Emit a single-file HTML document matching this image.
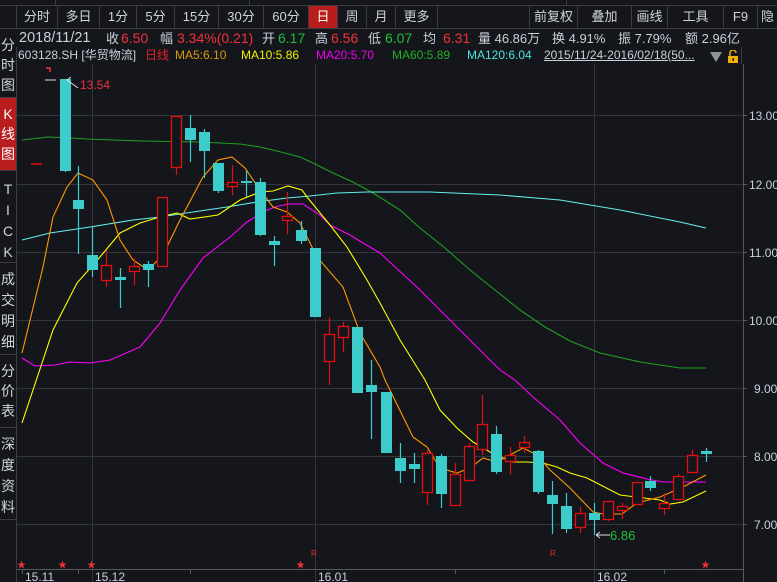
<!DOCTYPE html>
<html><head><meta charset="utf-8"><style>
*{margin:0;padding:0;box-sizing:border-box}
body{width:777px;height:582px;background:#14161b;overflow:hidden;position:relative;font-family:"Liberation Sans","Noto Sans CJK SC",sans-serif;color:#c8d0d8}
.a{position:absolute;white-space:nowrap}
.btn{position:absolute;top:6px;height:22px;font-size:13px;line-height:22px;text-align:center;border-right:1px solid #3a3d44;color:#d0d4da}
.side{position:absolute;left:0;width:16px;font-size:14px;line-height:20px;text-align:center;color:#d0d4da;border-bottom:1px solid #3a3d44}
.r{color:#f0313a}.g{color:#1fbf3a}
.inf{top:30px;font-size:13px;line-height:17px}
.r3{top:48px;font-size:12px;line-height:15px}
</style></head><body>
<div class="a" style="left:0;top:0;width:777px;height:6px;border-bottom:1px solid #3a3d44"></div>
<div class="a" style="left:55px;top:0;width:1px;height:5px;background:#3a3d44"></div>
<div class="a" style="left:249px;top:0;width:1px;height:5px;background:#3a3d44"></div>
<div class="a" style="left:566px;top:0;width:1px;height:5px;background:#3a3d44"></div>
<div class="a" style="left:0;top:28px;width:777px;height:1px;background:#3a3d44"></div>
<div class="a" style="left:16px;top:6px;width:1px;height:22px;background:#3a3d44"></div>
<div class="btn" style="left:17px;width:41px">分时</div>
<div class="btn" style="left:58px;width:42px">多日</div>
<div class="btn" style="left:100px;width:37px">1分</div>
<div class="btn" style="left:137px;width:38px">5分</div>
<div class="btn" style="left:175px;width:44px">15分</div>
<div class="btn" style="left:219px;width:45px">30分</div>
<div class="btn" style="left:264px;width:45px">60分</div>
<div class="btn" style="left:309px;width:29px;background:#b81c1c;color:#fff">日</div>
<div class="btn" style="left:338px;width:29px">周</div>
<div class="btn" style="left:367px;width:29px">月</div>
<div class="btn" style="left:396px;width:42px">更多</div>
<div class="btn" style="left:529px;width:49px;border-left:1px solid #3a3d44">前复权</div>
<div class="btn" style="left:578px;width:54px">叠加</div>
<div class="btn" style="left:632px;width:36px">画线</div>
<div class="btn" style="left:668px;width:56px">工具</div>
<div class="btn" style="left:724px;width:34px">F9</div>
<div class="btn" style="left:758px;width:19px;border:none">隐</div>

<div class="a inf" style="left:19px;font-size:14.5px">2018/11/21</div>
<div class="a inf" style="left:106px">收</div><div class="a inf r" style="left:121px;font-size:14px">6.50</div>
<div class="a inf" style="left:160px">幅</div><div class="a inf r" style="left:177px;font-size:14px">3.34%(0.21)</div>
<div class="a inf" style="left:262px">开</div><div class="a inf g" style="left:278px;font-size:14px">6.17</div>
<div class="a inf" style="left:315px">高</div><div class="a inf r" style="left:331px;font-size:14px">6.56</div>
<div class="a inf" style="left:368px">低</div><div class="a inf g" style="left:385px;font-size:14px">6.07</div>
<div class="a inf" style="left:423px">均</div><div class="a inf r" style="left:443px;font-size:14px">6.31</div>
<div class="a inf" style="left:478px">量 46.86万</div>
<div class="a inf" style="left:552px">换 4.91%</div>
<div class="a inf" style="left:618px">振 7.79%</div>
<div class="a inf" style="left:685px">额 2.96亿</div>

<div class="a r3" style="left:18px">603128.SH [华贸物流]</div>
<div class="a r3" style="left:145px;color:#e8202a">日线</div>
<div class="a r3" style="left:175px;color:#d89a10">MA5:6.10</div>
<div class="a r3" style="left:241px;color:#f0f000">MA10:5.86</div>
<div class="a r3" style="left:316px;color:#f000f0">MA20:5.70</div>
<div class="a r3" style="left:392px;color:#20b020">MA60:5.89</div>
<div class="a r3" style="left:467px;color:#50e0e0">MA120:6.04</div>
<div class="a r3" style="left:544px;text-decoration:underline">2015/11/24-2016/02/18(50...</div>
<svg class="a" style="left:709px;top:50px" width="32" height="14"><polygon points="1,2 13,2 7,12" fill="#909498"/><rect x="19" y="6" width="10" height="7" fill="#f0b000"/><path d="M21,6 V3 a3,3 0 0 1 6,0" stroke="#f0b000" stroke-width="1.5" fill="none"/><rect x="23.5" y="8" width="1.5" height="3" fill="#222"/></svg>
<div class="a" style="left:16px;top:47px;width:1px;height:535px;background:#3a3d44"></div>
<div class="a" style="left:741px;top:47px;width:1px;height:17px;background:#3a3d44"></div>

<div class="side" style="top:29px;height:69px;padding-top:6px">分<br>时<br>图</div>
<div class="side" style="top:98px;height:73px;background:#b81c1c;color:#fff;padding-top:6px">K<br>线<br>图</div>
<div class="side" style="top:171px;height:92px;padding-top:8px;line-height:21px">T<br>I<br>C<br>K</div>
<div class="side" style="top:263px;height:92px;padding-top:6px;line-height:21px">成<br>交<br>明<br>细</div>
<div class="side" style="top:355px;height:73px;padding-top:6px">分<br>价<br>表</div>
<div class="side" style="top:428px;height:92px;padding-top:6px;line-height:21px">深<br>度<br>资<br>料</div>

<svg class="a" style="left:0;top:0" width="777" height="582">
<g stroke="#33363c" stroke-width="1">
<line x1="17" y1="115.5" x2="743" y2="115.5"/><line x1="17" y1="184.5" x2="743" y2="184.5"/>
<line x1="17" y1="252.5" x2="743" y2="252.5"/><line x1="17" y1="320.5" x2="743" y2="320.5"/>
<line x1="17" y1="388.5" x2="743" y2="388.5"/><line x1="17" y1="456.5" x2="743" y2="456.5"/>
<line x1="17" y1="524.5" x2="743" y2="524.5"/>
<line x1="92.5" y1="64" x2="92.5" y2="582"/><line x1="315.5" y1="64" x2="315.5" y2="582"/><line x1="594.5" y1="64" x2="594.5" y2="582"/>
</g>
<g stroke="#55585e"><line x1="17" y1="569.5" x2="743" y2="569.5"/><line x1="743.5" y1="64" x2="743.5" y2="582"/>
<line x1="22.5" y1="569" x2="22.5" y2="574"/><line x1="78.5" y1="569" x2="78.5" y2="574"/><line x1="190.5" y1="569" x2="190.5" y2="574"/><line x1="455.5" y1="569" x2="455.5" y2="574"/><line x1="664.5" y1="569" x2="664.5" y2="574"/>
<line x1="743" y1="115.5" x2="747" y2="115.5"/><line x1="743" y1="184.5" x2="747" y2="184.5"/><line x1="743" y1="252.5" x2="747" y2="252.5"/><line x1="743" y1="320.5" x2="747" y2="320.5"/><line x1="743" y1="388.5" x2="747" y2="388.5"/><line x1="743" y1="456.5" x2="747" y2="456.5"/><line x1="743" y1="524.5" x2="747" y2="524.5"/>
</g>
<g font-size="12" fill="#c8d0d8" font-family="Liberation Sans,sans-serif">
<text x="749" y="120">13.00</text><text x="749" y="189">12.00</text><text x="749" y="257">11.00</text><text x="749" y="325">10.00</text><text x="754" y="393">9.00</text><text x="754" y="461">8.00</text><text x="754" y="529">7.00</text>
<text x="25" y="581">15.11</text><text x="95" y="581">15.12</text><text x="318" y="581">16.01</text><text x="597" y="581">16.02</text>
</g>
<g fill="none" stroke-width="1.1">
<polyline stroke="#20a020" points="22,140 40,138 48,137 72,138 87,139 113,140 143,141 200,142 240,144 260,147 277,151 300,157 313,163 333,173 353,182 373,193 400,210 420,228 445,248 470,270 495,290 520,310 545,327 570,341 600,353 640,362 680,368 706,368"/>
<polyline stroke="#60f0f0" points="22,240 50,233 90,227 133,220 160,217 193,212 227,207 257,202 287,198 310,196 337,193 367,192 430,192 500,195 560,200 620,210 680,222 706,228"/>
<polyline stroke="#ff00ff" points="22,358 35,366 55,365 70,362 90,363 110,360 140,347 160,323 180,290 203,258 230,237 247,222 263,212 275,207 288,204 303,204 320,215 330,225 350,235 363,243 380,253 420,290 460,330 500,370 515,380 533,397 560,420 580,443 603,463 623,473 647,479 663,482 706,482"/>
<polyline stroke="#ffff00" points="22,423 43,360 53,330 77,283 100,257 120,233 140,223 160,217 177,213 190,219 218,215 240,200 260,192 273,191 288,186 302,190 307,197 330,225 347,247 367,280 380,303 400,340 425,380 440,410 457,428 473,442 490,452 503,458 513,462 527,462 543,463 557,467 570,473 587,478 620,495 660,500 670,504 683,502 706,491"/>
<polyline stroke="#ff9900" points="22,353 43,267 53,217 67,187 78,173 93,180 107,200 120,240 133,260 148,270 163,255 180,220 203,177 218,160 232,157 245,168 260,190 273,207 287,212 300,223 307,237 317,257 343,287 360,333 380,367 385,380 413,437 427,447 440,468 457,473 470,468 483,458 497,462 510,455 523,448 537,455 550,470 570,488 593,512 603,514 622,514 637,503 660,497 683,487 706,475"/>
</g>
<g id="c" stroke-width="1.2"></g>
<g fill="#f0313a" font-size="12"><text x="80" y="89">13.54</text></g>
<g stroke="#e0e0e0" fill="none"><line x1="45" y1="80" x2="56" y2="80"/><path d="M78,88 L67,80 M67,80 L71,77 M67,80 L71,83"/></g>
<path d="M46,68 H50 V72" stroke="#f0313a" stroke-width="1.5" fill="none"/>
<g stroke="#e0e0e0" fill="none"><path d="M596,535 H610 M596,535 L600,532 M596,535 L600,538"/></g>
<text x="610" y="540" fill="#1fbf3a" font-size="13">6.86</text>
<g fill="#f0313a" font-size="9"><text x="17" y="568">★</text><text x="58" y="568">★</text><text x="87" y="568">★</text><text x="296" y="568">★</text><text x="701" y="568">★</text></g>
<g fill="#e03030" font-size="8"><text x="311" y="556">R</text><text x="550" y="556">R</text></g>
</svg>
<script>
var d=[[64.5,'C',79,171,79,172],[78.4,'C',200,209,166,254],[92.2,'C',255,270,227,277],[106,'R',265,280,250,287],[120,'C',277,280,268,308],[134,'R',266,271,258,285],[148,'C',264,270,261,287],[162,'R',197,266,197,266],[176,'R',116,167,116,175],[190,'C',128,140,115,162],[204,'C',132,151,129,178],[218,'C',163,191,163,193],[232,'R',182,186,165,195],[246,'C',181,183,170,197],[260,'C',182,235,178,236],[274,'C',241,245,236,266],[287,'R',216,220,192,234],[301,'C',230,241,221,244],[315,'C',248,317,248,317],[329,'R',334,361,317,385],[343,'R',326,337,322,352],[357,'C',327,393,327,393],[371,'C',385,392,360,439],[386,'C',392,453,392,453],[400,'C',458,471,443,483],[414,'C',464,469,453,483],[427,'R',453,492,450,505],[441,'C',456,494,454,508],[455,'R',474,505,463,506],[469,'R',446,480,443,480],[482,'R',424,449,395,455],[496,'C',434,472,426,474],[510,'R',455,461,447,474],[524,'R',442,447,436,453],[538,'C',451,492,450,494],[552,'C',495,504,481,534],[566,'C',506,529,493,533],[580,'R',513,527,507,533],[594,'C',513,520,503,535],[608,'R',501,519,501,521],[622,'R',506,510,503,519],[637,'R',482,504,482,505],[650,'C',481,488,476,491],[664,'R',503,508,493,515],[678,'R',476,499,474,500],[692,'R',455,472,450,472],[706,'C',451,454,448,462]];
var s='<line x1="31" y1="164" x2="42" y2="164" stroke="#e01010" stroke-width="1.5"/>';
d.forEach(function(a){var x=Math.round(a[0]);
if(a[1]=='C'){s+='<line x1="'+(x+.5)+'" y1="'+a[4]+'" x2="'+(x+.5)+'" y2="'+a[5]+'" stroke="#3ccccc"/><rect x="'+(x-5)+'" y="'+a[2]+'" width="11" height="'+Math.max(2,a[3]-a[2])+'" fill="#3ccccc"/>';}
else{s+='<line x1="'+(x+.5)+'" y1="'+a[4]+'" x2="'+(x+.5)+'" y2="'+a[2]+'" stroke="#e01010"/><line x1="'+(x+.5)+'" y1="'+a[3]+'" x2="'+(x+.5)+'" y2="'+a[5]+'" stroke="#e01010"/><rect x="'+(x-4.5)+'" y="'+(a[2]+.5)+'" width="10" height="'+Math.max(2,a[3]-a[2])+'" fill="#14161b" stroke="#e01010" stroke-width="1.3"/>';}});
document.getElementById('c').innerHTML=s;
</script>
</body></html>
